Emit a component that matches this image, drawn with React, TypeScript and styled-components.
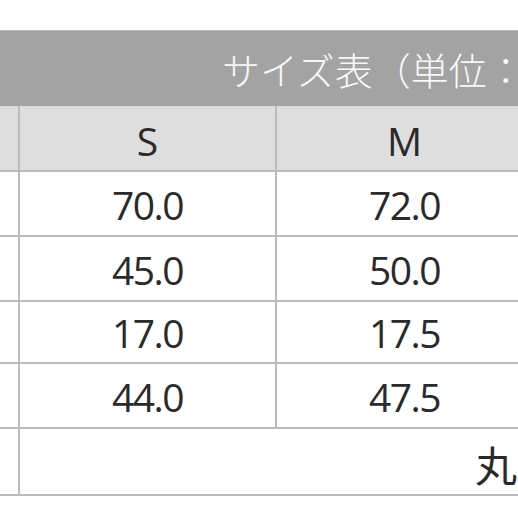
import React from "react";
import styled, { createGlobalStyle } from "styled-components";

const Global = createGlobalStyle`
  html, body { margin: 0; padding: 0; background: #ffffff; overflow: hidden; }
  body { width: 518px; height: 518px; }
`;

const Page = styled.div`
  width: 518px;
  height: 518px;
  overflow: hidden;
  padding-top: 30px;
  box-sizing: border-box;
`;

const Table = styled.table`
  table-layout: fixed;
  border-collapse: collapse;
  width: 1256px;
  margin-left: -210px;
  font-family: "Open Sans", "Noto Sans CJK JP", sans-serif;
  color: #2a2a2a;
`;

const Col = styled.col<{ $w: number }>`
  width: ${(p) => p.$w}px;
`;

const TitleRow = styled.tr`
  height: 75px;
`;

const Title = styled.th`
  background: #a3a3a3;
  color: #f8f8f8;
  font-family: "Noto Sans CJK JP", sans-serif;
  font-weight: 300;
  font-size: 38px;
  text-align: center;
  padding: 0;
  border: none;
  border-top: 1px solid #bdbdbd;
`;

const Row = styled.tr<{ $h: number }>`
  height: ${(p) => p.$h}px;
`;

const SizeCell = styled.td`
  background: #dedede;
  border: 2px solid #bbbbbb;
  border-top: none;
  text-align: center;
  vertical-align: middle;
  padding: 6px 0 0;
  font-size: 39px;
  font-weight: 400;
`;

const LabelCell = styled.td`
  background: #ffffff;
  border: 2px solid #bbbbbb;
  text-align: center;
  vertical-align: middle;
  padding: 0;
  font-family: "Noto Sans CJK JP", sans-serif;
  font-size: 34px;
`;

const ValueCell = styled.td`
  background: #ffffff;
  border: 2px solid #bbbbbb;
  text-align: center;
  vertical-align: middle;
  padding: 2px 0 0;
  font-size: 39px;
  font-weight: 400;
  letter-spacing: -1.5px;
`;

const NoteCell = styled.td`
  background: #ffffff;
  border: 2px solid #bbbbbb;
  text-align: center;
  vertical-align: middle;
  padding: 4px 0 0 10px;
  font-family: "Noto Sans CJK JP", sans-serif;
  font-size: 42px;
  font-weight: 400;
`;

const sizes = ["S", "M", "L", "XL"];

const rows: { label: string; values: string[]; h: number }[] = [
  { label: "着丈", values: ["70.0", "72.0", "74.0", "76.0"], h: 65 },
  { label: "身幅", values: ["45.0", "50.0", "55.0", "60.0"], h: 65 },
  { label: "肩幅", values: ["17.0", "17.5", "18.0", "18.5"], h: 62 },
  { label: "袖丈", values: ["44.0", "47.5", "50.0", "52.5"], h: 65 },
];

export default function App() {
  return (
    <Page>
      <Global />
      <Table>
        <colgroup>
          <Col $w={228} />
          {sizes.map((s) => (
            <Col key={s} $w={257} />
          ))}
        </colgroup>
        <thead>
          <TitleRow>
            <Title colSpan={5}>サイズ表（単位：cm）</Title>
          </TitleRow>
        </thead>
        <tbody>
          <Row $h={65}>
            <SizeCell />
            {sizes.map((s) => (
              <SizeCell key={s}>{s}</SizeCell>
            ))}
          </Row>
          {rows.map((r) => (
            <Row key={r.label} $h={r.h}>
              <LabelCell>{r.label}</LabelCell>
              {r.values.map((v, i) => (
                <ValueCell key={i}>{v}</ValueCell>
              ))}
            </Row>
          ))}
          <Row $h={63}>
            <LabelCell>洗濯</LabelCell>
            <NoteCell colSpan={4}>丸洗い</NoteCell>
          </Row>
        </tbody>
      </Table>
    </Page>
  );
}
